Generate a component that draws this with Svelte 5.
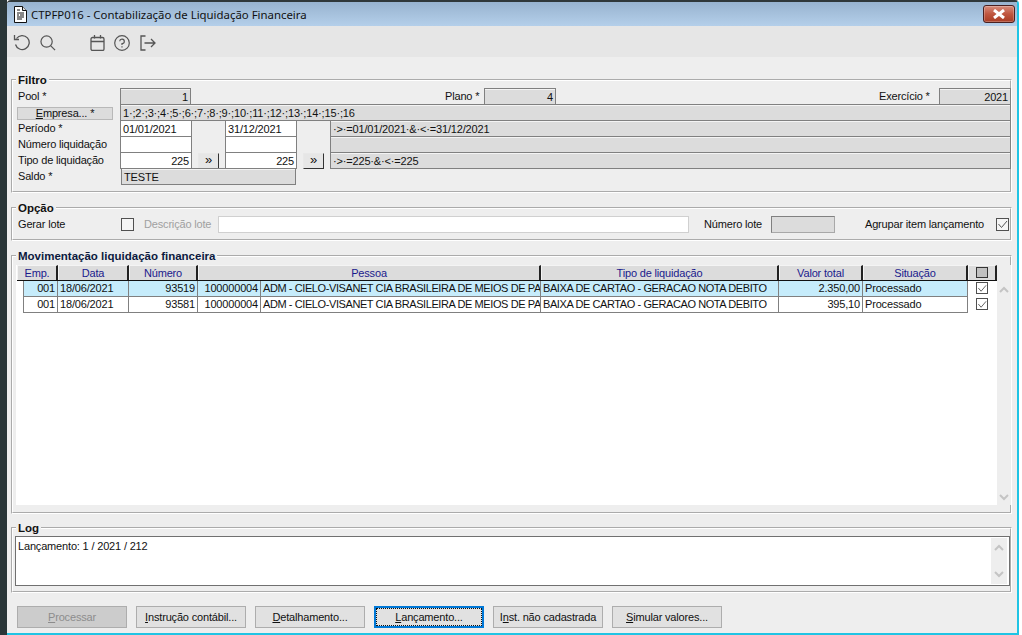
<script>
  const rows = [
    { emp: '001', data: '18/06/2021', num: '93519', cod: '100000004', pessoa: 'ADM - CIELO-VISANET CIA BRASILEIRA DE MEIOS DE PAGAMENTO', tipo: 'BAIXA DE CARTAO - GERACAO NOTA DEBITO', valor: '2.350,00', sit: 'Processado', sel: true },
    { emp: '001', data: '18/06/2021', num: '93581', cod: '100000004', pessoa: 'ADM - CIELO-VISANET CIA BRASILEIRA DE MEIOS DE PAGAMENTO', tipo: 'BAIXA DE CARTAO - GERACAO NOTA DEBITO', valor: '395,10', sit: 'Processado', sel: false }
  ];
</script>

{#snippet chevUp()}
  <svg class="chev" width="10" height="7" viewBox="0 0 10 7"><path d="M1 6 L5 2 L9 6" fill="none" stroke="#c4c4c4" stroke-width="2"/></svg>
{/snippet}
{#snippet chevDown()}
  <svg class="chev" width="10" height="7" viewBox="0 0 10 7"><path d="M1 1 L5 5 L9 1" fill="none" stroke="#c4c4c4" stroke-width="2"/></svg>
{/snippet}
{#snippet check(on)}
  <span class="cb">
    {#if on}<svg width="11" height="11" viewBox="0 0 11 11"><path d="M1.5 5 L4.5 8.5 L10 2" fill="none" stroke="#555" stroke-width="1"/></svg>{/if}
  </span>
{/snippet}

<div class="page">
  <div class="edge"></div>
  <div class="window">
    <header class="title">
      <svg class="doc" width="14" height="17" viewBox="0 0 14 17">
        <path d="M1.5 .5 H9.5 L13.5 4.5 V16.5 H1.5 Z" fill="#fff" stroke="#111"/>
        <path d="M9.5 .5 V4.5 H13.5" fill="#ddd" stroke="#111"/>
        <path d="M4 4 H7 M4 7 H11 M4 9 H6 M7 9 H11 M4 11 H11 M4 13 H9" stroke="#111"/>
      </svg>
      <span class="ttext">CTPFP016 - Contabilização de Liquidação Financeira</span>
      <button class="close" aria-label="Fechar">
        <svg width="14" height="10" viewBox="0 0 14 10"><path d="M2 1 L12 9 M12 1 L2 9" stroke="#fff" stroke-width="3"/></svg>
      </button>
    </header>

    <nav class="tools">
      <svg width="18" height="17" viewBox="0 0 18 17" fill="none" stroke="#555" stroke-width="1.3"><path d="M3.5 4.5 A7 7 0 1 1 2.5 10.5"/><path d="M1.5 1 V5.5 H6"/></svg>
      <svg class="t2" width="16" height="16" viewBox="0 0 17 17" fill="none" stroke="#555" stroke-width="1.3"><circle cx="7" cy="7" r="6"/><path d="M11.5 11.5 L16 16"/></svg>
      <svg class="t3" width="15" height="16" viewBox="0 0 15 16" fill="none" stroke="#555" stroke-width="1.3"><rect x="1" y="2.5" width="13" height="13" rx="1.5"/><path d="M1 6.5 H14 M4.5 0 V3.5 M10.5 0 V3.5"/></svg>
      <svg class="t4" width="16" height="16" viewBox="0 0 16 16" fill="none" stroke="#555" stroke-width="1.2"><circle cx="8" cy="8" r="7.3"/><path d="M5.7 6.2 A2.3 2.2 0 1 1 8 8.6 V10"/><path d="M8 11.2 V12.6"/></svg>
      <svg class="t5" width="16" height="16" viewBox="0 0 16 16" fill="none" stroke="#555" stroke-width="1.3"><path d="M5.5 1 H1 V15 H5.5"/><path d="M4.5 8 H15 M11 4 L15 8 L11 12"/></svg>
    </nav>

    <main class="content">
      <fieldset class="box filtro">
        <legend>Filtro</legend>
        <div class="grid">
          <span class="lb">Pool *</span>
          <div class="f r w71">1</div>
          <div class="poolrest">
            <span class="lb plano">Plano *</span>
            <div class="f r w72">4</div>
            <span class="lb exerc">Exercício *</span>
            <div class="f r w72">2021</div>
          </div>

          <button class="emp"><span><u>E</u>mpresa... *</span></button>
          <div class="f full">1·;2·;3·;4·;5·;6·;7·;8·;9·;10·;11·;12·;13·;14·;15·;16</div>

          <span class="lb">Período *</span>
          <div class="f in">01/01/2021</div>
          <span></span>
          <div class="f in">31/12/2021</div>
          <span></span>
          <div class="f">·&gt;·=01/01/2021·&amp;·&lt;·=31/12/2021</div>

          <span class="lb">Número liquidação</span>
          <div class="f in"></div>
          <span></span>
          <div class="f in"></div>
          <span></span>
          <div class="f"></div>

          <span class="lb">Tipo de liquidação</span>
          <div class="f in r">225</div>
          <button class="more">»</button>
          <div class="f in r">225</div>
          <button class="more">»</button>
          <div class="f">·&gt;·=225·&amp;·&lt;·=225</div>

          <span class="lb">Saldo *</span>
          <div class="f saldo">TESTE</div>
        </div>
      </fieldset>

      <fieldset class="box opcao">
        <legend>Opção</legend>
        <div class="oprow">
          <span class="lb gl">Gerar lote</span>
          {@render check(false)}
          <span class="lb desc">Descrição lote</span>
          <div class="ibox"></div>
          <span class="lb nl">Número lote</span>
          <div class="nbox"></div>
          <span class="lb ag">Agrupar item lançamento</span>
          {@render check(true)}
        </div>
      </fieldset>

      <fieldset class="box mov">
        <legend>Movimentação liquidação financeira</legend>
        <div class="tablewrap">
          <div class="table">
            <div class="thead">
              <div class="th">Emp.</div>
              <div class="th">Data</div>
              <div class="th">Número</div>
              <div class="th">Pessoa</div>
              <div class="th">Tipo de liquidação</div>
              <div class="th">Valor total</div>
              <div class="th">Situação</div>
              <div class="th hc"><span class="hsq"></span></div>
            </div>
            {#each rows as r}
              <div class="tr" class:sel={r.sel}>
                <div class="td r">{r.emp}</div>
                <div class="td">{r.data}</div>
                <div class="td r">{r.num}</div>
                <div class="td r">{r.cod}</div>
                <div class="td clip">{r.pessoa}</div>
                <div class="td clip">{r.tipo}</div>
                <div class="td r">{r.valor}</div>
                <div class="td">{r.sit}</div>
                <div class="tc">{@render check(true)}</div>
              </div>
            {/each}
          </div>
          <div class="sb mainsb">{@render chevUp()}{@render chevDown()}</div>
        </div>
      </fieldset>

      <fieldset class="box log">
        <legend>Log</legend>
        <div class="logarea">
          <span class="logtext">Lançamento: 1 / 2021 / 212</span>
          <div class="sb logsb">{@render chevUp()}{@render chevDown()}</div>
        </div>
      </fieldset>

      <div class="buttons">
        <button class="btn dis"><span><u>P</u>rocessar</span></button>
        <button class="btn"><span><u>I</u>nstrução contábil...</span></button>
        <button class="btn"><span><u>D</u>etalhamento...</span></button>
        <button class="btn focus"><span class="dots"><u>L</u>ançamento...</span></button>
        <button class="btn"><span>I<u>n</u>st. não cadastrada</span></button>
        <button class="btn"><span><u>S</u>imular valores...</span></button>
      </div>
    </main>
  </div>
</div>

<style>
  :global(body) { margin: 0; background: #fff; }
  * { box-sizing: border-box; }
  .page {
    width: 1022px; height: 635px; display: flex; overflow: hidden;
    font: 11px "Liberation Sans", Arial, sans-serif; letter-spacing: -.17px; color: #111;
  }
  .edge { width: 7px; background: #2a3638; flex: none; }
  .window {
    width: 1012px; height: 635px; flex: none; display: flex; flex-direction: column;
    border-top: 2px solid #30383a; border-right: 2px solid #20c4e4; border-bottom: 2px solid #20c4e4;
    border-top-right-radius: 4px; border-top-left-radius: 4px; overflow: hidden; background: #eee;
  }
  .title {
    height: 24px; flex: none; display: flex; align-items: center; padding: 0 2px 0 6px;
    background: linear-gradient(#98b3cf, #b4cfea);
  }
  .doc { margin-right: 4px; flex: none; }
  .ttext { font: 11.4px "Noto Sans", "Open Sans", sans-serif; letter-spacing: 0; color: #111; }
  .close {
    margin-left: auto; width: 32px; height: 18px; padding: 0; border: 1px solid #4a2020; border-radius: 3px;
    background: linear-gradient(#d78d7d, #c0563f 50%, #a83c24); display: flex; align-items: center; justify-content: center;
    box-shadow: inset 0 0 0 1px rgba(255,255,255,.25);
  }
  .tools {
    height: 31px; flex: none; background: #e6e6e6; display: flex; align-items: center; padding: 2px 0 0 6px;
  }
  .t2 { margin-left: 9px; }
  .t3 { margin-left: 34px; }
  .t4 { margin-left: 9px; }
  .t5 { margin-left: 10px; }
  .content { flex: 1; padding: 16px 0 0 4px; background: #eee; display: flex; flex-direction: column; }
  .box {
    margin: 0; padding: 0; width: 1001px; min-width: 0; border: 2px groove #fff; flex: none;
  }
  legend { margin-left: 3px; padding: 0 2px; font-weight: bold; font-size: 11.5px; letter-spacing: 0; line-height: 14px; height: 14px; color: #111; }
  .filtro { height: 120px; }
  .opcao { height: 40px; margin-top: 8px; }
  .mov { height: 265px; margin-top: 8px; }
  .log { height: 72px; margin-top: 7px; }
  .mov legend { color: #0c1a40; }

  .grid {
    display: grid; padding: 1px 0 0 5px;
    grid-template-columns: 102px 72px 33px 72px 33px 681px;
    grid-auto-rows: 16px;
  }
  .lb { line-height: 16px; white-space: nowrap; }
  .f {
    height: 17px; border: 1px solid #808080; background: #dcdcdc; line-height: 16px; padding: 0 2px;
    white-space: nowrap; overflow: hidden; box-shadow: inset 0 1px 0 #f4f4f4;
  }
  .f.in { background: #fff; box-shadow: none; }
  .r { text-align: right; }
  .w71 { width: 71px; }
  .w72 { width: 72px; flex: none; }
  .poolrest { grid-column: 3 / 7; display: flex; }
  .plano { margin-left: 253px; width: 39px; }
  .exerc { margin-left: 323px; width: 60px; }
  .full { grid-column: 2 / 7; }
  .saldo { grid-column: 2 / 5; margin-left: 1px; width: 175px; }
  .emp {
    width: 96px; height: 13px; margin: 3px 0 0 -1px; padding: 0; border: 1px solid #b8b8b8; background: #dcdcdc;
    font: inherit; letter-spacing: inherit; line-height: 11px; color: #111;
  }
  .more {
    width: 21px; height: 16px; margin: 1px 0 0 6px; padding: 0 0 2px; border: 1px solid #e8e8e8;
    border-right-color: #333; border-bottom-color: #333; background: #e6e6e6; font: 13px "Liberation Sans", sans-serif; line-height: 12px; color: #111;
  }
  .oprow { display: flex; align-items: center; height: 18px; padding: 0 0 0 5px; }
  .cb {
    width: 13px; height: 13px; flex: none; border: 1px solid #505050; background: #f4f4f4; display: flex; align-items: center; justify-content: center;
  }
  .gl { width: 103px; }
  .desc { margin-left: 10px; width: 74px; color: #a0a0a0; }
  .ibox { width: 471px; height: 17px; background: #fff; border: 1px solid #d0d0d0; }
  .nl { margin-left: 15px; width: 67px; }
  .nbox { width: 64px; height: 17px; background: #dcdcdc; border: 1px solid #808080; border-color: #808080 #a8a8a8 #a8a8a8 #808080; }
  .ag { margin-left: 30px; width: 131px; }

  .tablewrap { display: flex; margin-left: 3px; height: 240px; margin-top: 2px; }
  .table { width: 981px; background: #fff; padding-left: 1px; }
  .thead {
    display: grid; height: 16px; grid-template-columns: 41px 71px 69px 343px 238px 84px 105px 29px; width: 980px;
    background: #fff; border-bottom: 1px solid #111;
  }
  .th {
    background: #dcdcdc; color: #1a1a8c; text-align: center; line-height: 14px;
    border-right: 2px solid #222; border-top: 1px solid #f4f4f4; border-left: 1px solid #f4f4f4;
  }
  .th.hc { display: flex; align-items: center; justify-content: center; }
  .hsq { width: 12px; height: 11px; background: #c0c0c0; border: 1px solid #333; display: block; margin-top: -1px; }
  .tr {
    display: grid; height: 16px; margin-left: 6px; width: 974px;
    grid-template-columns: 35px 71px 69px 63px 280px 238px 84px 105px 28px;
  }
  .td {
    border-right: 1px solid #808080; border-bottom: 1px solid #808080; line-height: 15px; padding: 0 2px;
    white-space: nowrap; overflow: hidden; background: #fff;
  }
  .td.clip { letter-spacing: -.41px; }
  .td:first-child { border-left: 1px solid #808080; }
  .tr.sel .td { background: #c6ecfb; }
  .tc { display: flex; align-items: flex-start; padding: 1px 0 0 8px; }
  .tc .cb { width: 12px; height: 12px; background: #fff; }
  .sb { background: #eee; display: flex; flex-direction: column; justify-content: space-between; align-items: center; flex: none; }
  .mainsb { width: 14px; height: 240px; padding: 21px 0 4px; }
  .logarea {
    position: relative; margin: 1px 0 0 2px; width: 995px; height: 50px; background: #fff; border: 1px solid #707070; padding: 2px 2px 3px; line-height: 14px;
    display: flex; justify-content: space-between;
  }
  .logsb { width: 16px; height: 46px; margin: -1px 0 0 0; padding: 6px 0 6px; }
  .chev { display: block; }
  .buttons { display: flex; gap: 9px; padding: 13px 0 0 6px; }
  .btn {
    width: 110px; height: 22px; padding: 0; background: #e1e1e1; border: 1px solid #adadad; font: inherit; letter-spacing: inherit; color: #111;
  }
  .btn.dis { background: #cccccc; color: #8c8c8c; }
  .btn.focus { border: 2px solid #0078d7; }
  .dots { display: block; margin: 1px; line-height: 16px; outline: 1px dotted #111; outline-offset: 0; }
</style>
